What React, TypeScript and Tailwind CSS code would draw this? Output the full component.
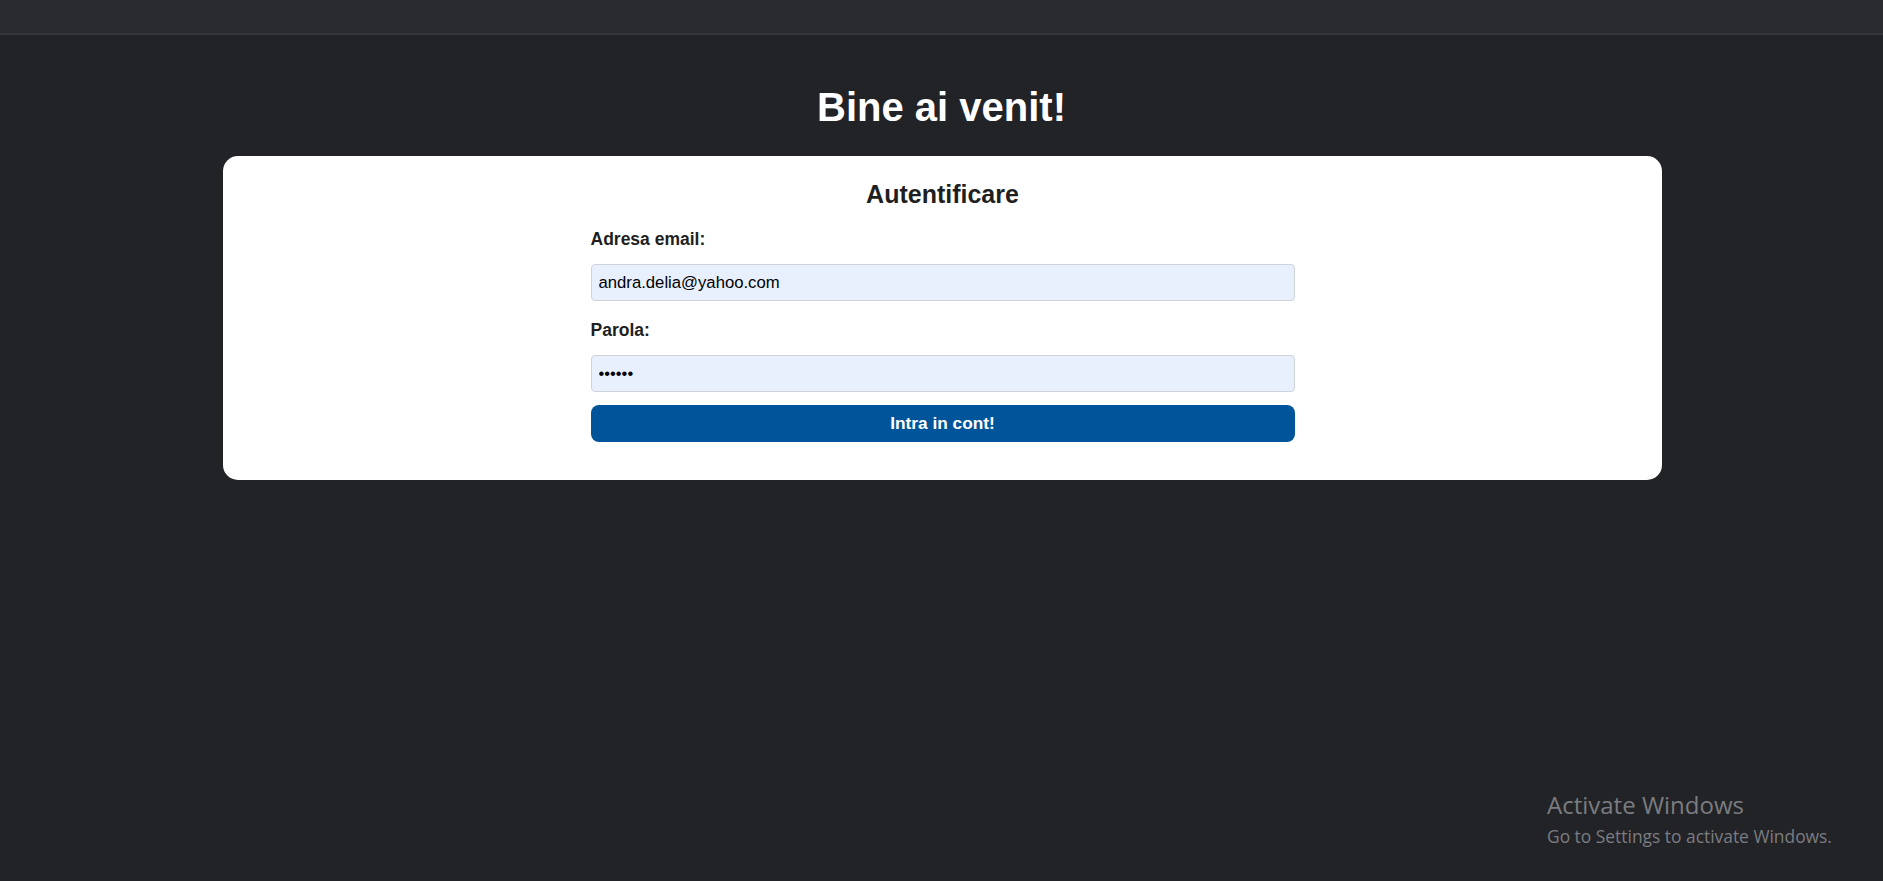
import { useState } from "react";

export default function App() {
  const [email, setEmail] = useState("andra.delia@yahoo.com");
  const [parola, setParola] = useState("parola");

  return (
    <div className="relative min-h-screen bg-[#222327] font-['Liberation_Sans',Arial,sans-serif]">
      <div className="h-[35px] bg-[#292a2f] border-b-2 border-[#35363b]" />

      <h1 className="mt-[49px] mb-[26px] text-center text-[40px] leading-[46px] font-bold text-white">
        Bine ai venit!
      </h1>

      <div className="ml-[223px] w-[1439px] rounded-[15px] bg-white pt-[24px] pb-[38px]">
        <h2 className="text-center text-[25px] leading-[29px] font-bold text-[#1f1f1f]">Autentificare</h2>

        <form className="mx-auto mt-[20px] flex w-[704px] flex-col" onSubmit={e => e.preventDefault()}>
          <label htmlFor="email" className="text-[17.5px] leading-[20px] font-bold text-[#1f1f1f]">
            Adresa email:
          </label>
          <input
            id="email"
            type="email"
            value={email}
            onChange={e => setEmail(e.target.value)}
            className="mt-[15px] h-[37px] rounded-[4px] border border-[#cfd3d9] bg-[#e8f0fe] px-[7px] text-[16.7px] text-black outline-none"
          />

          <label htmlFor="parola" className="mt-[19px] text-[17.5px] leading-[20px] font-bold text-[#1f1f1f]">
            Parola:
          </label>
          <input
            id="parola"
            type="password"
            value={parola}
            onChange={e => setParola(e.target.value)}
            className="mt-[15px] h-[37px] rounded-[4px] border border-[#cfd3d9] bg-[#e8f0fe] px-[7px] text-[16.5px] text-black outline-none"
          />

          <button
            type="submit"
            className="mt-[13px] h-[37px] rounded-[8px] bg-[#00559a] text-[17.3px] font-bold text-white"
          >
            Intra in cont!
          </button>
        </form>
      </div>

      <div className="absolute left-[1547px] top-[791px] font-['Open_Sans',sans-serif] text-[#7b7c80]">
        <div className="text-[24px] leading-[28px]">Activate Windows</div>
        <div className="mt-[7px] text-[17.4px] leading-[20px]">Go to Settings to activate Windows.</div>
      </div>
    </div>
  );
}
